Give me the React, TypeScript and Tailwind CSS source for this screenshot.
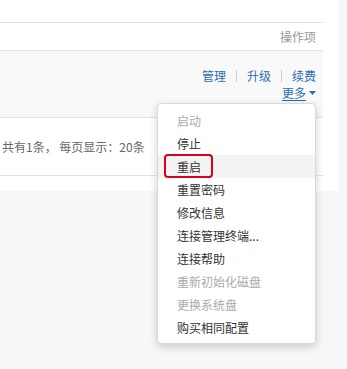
import { Fragment } from 'react';

const menuItems = [
  { label: '启动', disabled: true },
  { label: '停止' },
  { label: '重启', active: true },
  { label: '重置密码' },
  { label: '修改信息' },
  { label: '连接管理终端...' },
  { label: '连接帮助' },
  { label: '重新初始化磁盘', disabled: true },
  { label: '更换系统盘', disabled: true },
  { label: '购买相同配置' },
];

const font = { fontFamily: '"Microsoft YaHei", "Noto Sans CJK SC", sans-serif' };

export default function App() {
  return (
    <div className="relative w-[347px] h-[369px] bg-[#f6f7f9] overflow-hidden text-[12px]" style={font}>
      {/* Card */}
      <div className="w-[339px] h-[191px] bg-white pr-[16px]">
        <div className="h-[23px] border-b border-[#e2e2e2]" />

        {/* Header */}
        <div className="h-[28px] border-b border-[#e2e2e2] flex items-center justify-end pr-[7px] text-[#999]">
          操作项
        </div>

        {/* Row */}
        <div className="h-[67px] border-b border-[#e2e2e2] bg-[#f9f9f9] flex flex-col items-end pt-[16px] pr-[7px]">
          <div className="flex items-center text-[#2b6cb5] leading-[18px]">
            {['管理', '升级', '续费'].map((t, i) => (
              <Fragment key={t}>
                {i > 0 && <span className="mx-[10px] w-px h-[12px] bg-[#ccc]" />}
                <span>{t}</span>
              </Fragment>
            ))}
          </div>
          <div className="flex items-center text-[#2b6cb5] leading-[17px] mt-[-1px]">
            <span className="underline underline-offset-2">更多</span>
            <svg width="7" height="4" viewBox="0 0 7 4" className="ml-[3px]">
              <path d="M0 0 L7 0 L3.5 4 Z" fill="#2b6cb5" />
            </svg>
          </div>
        </div>

        {/* Pagination */}
        <div className="h-[58px] border-b border-[#e2e2e2] flex items-center pl-[2px] text-[#666]">
          共有1条， 每页显示：20条
        </div>
      </div>

      {/* Dropdown */}
      <div className="absolute left-[157px] top-[103px] w-[159px] h-[241px] bg-white border border-[#d9d9d9] rounded-[4px] shadow-[0_3px_8px_rgba(0,0,0,0.18)] pt-[5px]">
        {menuItems.map((item) => (
          <div
            key={item.label}
            className={`h-[23px] flex items-center pl-[19px] ${item.active ? 'bg-[#f3f3f3]' : ''} ${
              item.disabled ? 'text-[#aaa]' : 'text-[#333]'
            }`}
          >
            {item.label}
          </div>
        ))}
      </div>

      {/* Annotation box */}
      <div className="absolute left-[164px] top-[154px] w-[49px] h-[24px] border-2 border-[#d9001b] rounded-[4px]" />
    </div>
  );
}
